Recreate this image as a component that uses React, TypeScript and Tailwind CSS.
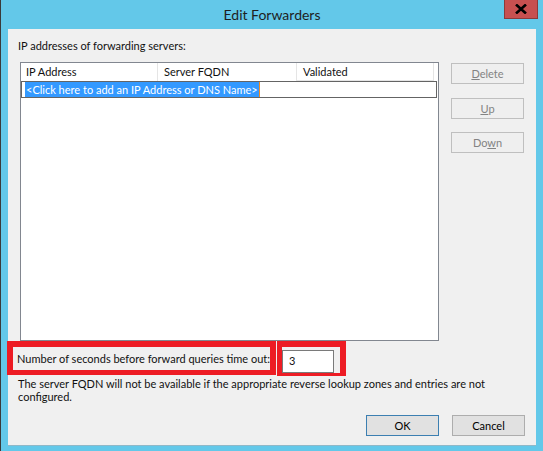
import React from "react";

const font = { fontFamily: 'Lato, "Noto Sans", sans-serif' };

function DialogButton({
  children,
  disabled = false,
  primary = false,
  className = "",
}: {
  children: React.ReactNode;
  disabled?: boolean;
  primary?: boolean;
  className?: string;
}) {
  return (
    <button
      type="button"
      className={`flex h-[21px] w-[73px] items-center justify-center border text-[11px] leading-none ${
        disabled
          ? "border-[#bfbfbf] bg-[#efefef] text-[#838383]"
          : primary
            ? "border-[#3c7fb1] bg-[#e1e1e1] text-black"
            : "border-[#adadad] bg-[#e1e1e1] text-black"
      } ${className}`}
    >
      {children}
    </button>
  );
}

export default function App() {
  return (
    <div
      className="relative h-[451px] w-[543px] overflow-hidden border-l border-[#3a3a3a] bg-[#63c8e9]"
      style={font}
    >
      {/* title bar */}
      <div className="relative flex h-[29px] items-center justify-center">
        <span className="pb-[1px] text-[14px] text-[#1e1e1e]">Edit Forwarders</span>
        <div className="absolute right-[5px] top-0 flex h-[19px] w-[34px] items-center justify-center border border-t-0 border-[#8c3a3a] bg-[#c75050]">
          <svg width="12" height="10" viewBox="0 0 12 10">
            <path d="M1 0.5 L11 9.5 M11 0.5 L1 9.5" stroke="#000" strokeWidth="2.6" />
          </svg>
        </div>
      </div>

      {/* client area */}
      <div className="ml-[7px] h-[416px] w-[528px] bg-[#f0f0f0] shadow-[0_1px_0_#8fb8c8]">
        <p className="pl-[10px] pt-[9px] text-[11px] leading-[15px] text-[#111]">
          IP addresses of forwarding servers:
        </p>

        <div className="mt-[9px] flex">
          {/* list view */}
          <div className="ml-[12px] h-[279px] w-[419px] border border-[#828790] bg-white">
            <div className="flex h-[18px] text-[11px] leading-[17px] text-[#111]">
              <div className="w-[137px] border-r border-[#e5e5e5] pl-[5px]">IP Address</div>
              <div className="w-[139px] border-r border-[#e5e5e5] pl-[6px]">Server FQDN</div>
              <div className="w-[137px] border-r border-b border-[#e5e5e5] pl-[6px]">Validated</div>
            </div>
            <div className="flex h-[17px] w-[416px] items-center border border-[#646464] pl-[3px]">
              <span className="h-[15px] border-r border-[#f08a24] bg-[#3399ff] px-[1px] text-[11px] leading-[15px] text-white">
                &lt;Click here to add an IP Address or DNS Name&gt;
              </span>
            </div>
          </div>

          {/* side buttons */}
          <div className="ml-[12px] mt-[1px] flex flex-col">
            <DialogButton disabled>
              <span>
                <span className="underline">D</span>elete
              </span>
            </DialogButton>
            <DialogButton disabled className="mt-[14px]">
              <span>
                <span className="underline">U</span>p
              </span>
            </DialogButton>
            <DialogButton disabled className="mt-[13px]">
              <span>
                Do<span className="underline">w</span>n
              </span>
            </DialogButton>
          </div>
        </div>

        {/* timeout row, highlighted in red */}
        <div className="flex">
          <div className="ml-[-1px] flex h-[34px] w-[269px] items-center border-[6px] border-b-[5px] border-[#ed1c24] pl-[4px]">
            <span className="whitespace-nowrap text-[11px] leading-none text-[#111]">
              Number of seconds before forward queries time out:
            </span>
          </div>
          <div className="ml-[1px] h-[35px] w-[69px] border-[6px] border-l-[5px] border-b-[3px] border-[#ed1c24]">
            <div className="mt-[3px] flex h-[23px] w-[52px] items-center border border-[#7a7a7a] bg-white pl-[6px] text-[11px] text-[#111]">
              3
            </div>
          </div>
        </div>

        <p className="mt-[1px] w-[484px] pl-[10px] text-[11px] leading-[13px] text-[#111]">
          The server FQDN will not be available if the appropriate reverse lookup zones and entries are not
          configured.
        </p>

        <div className="mt-[12px] flex justify-end gap-[13px] pr-[11px]">
          <DialogButton primary>OK</DialogButton>
          <DialogButton>Cancel</DialogButton>
        </div>
      </div>
    </div>
  );
}
